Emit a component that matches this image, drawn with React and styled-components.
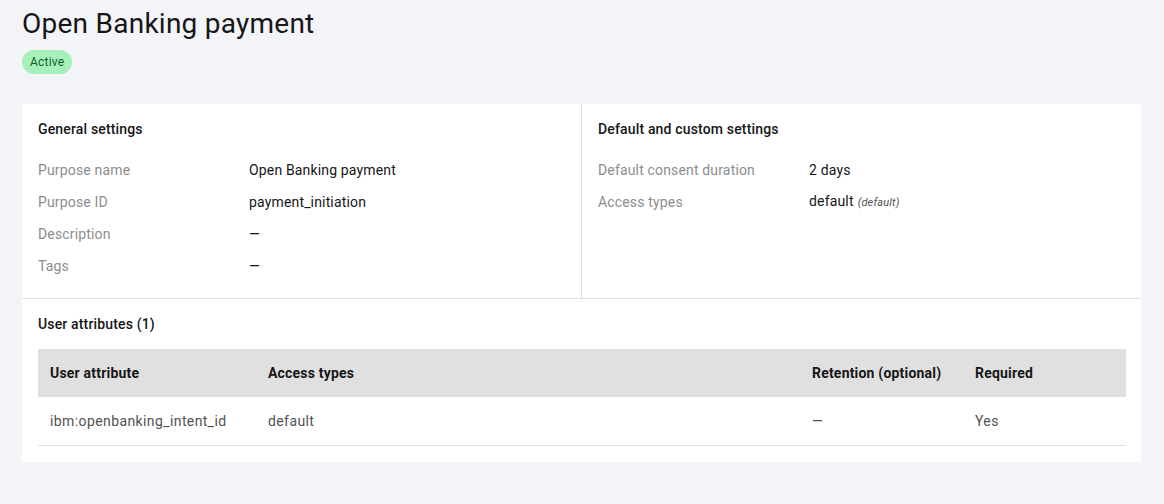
import React from "react";
import styled, { createGlobalStyle } from "styled-components";

const GlobalStyle = createGlobalStyle`
  *, *::before, *::after {
    box-sizing: border-box;
  }
  html, body {
    margin: 0;
    padding: 0;
    background: #f2f4f8;
  }
  body {
    font-family: Roboto, "Noto Sans", "Liberation Sans", sans-serif;
    color: #161616;
    -webkit-font-smoothing: antialiased;
  }
`;

const Page = styled.div`
  padding: 6px 23px 40px 22px;
  display: flex;
  flex-direction: column;
  align-items: flex-start;
`;

const Title = styled.h1`
  margin: 0;
  font-size: 28px;
  line-height: 36px;
  font-weight: 400;
  color: #161616;
  letter-spacing: 0.25px;
`;

const Tag = styled.span`
  margin-top: 8px;
  display: inline-flex;
  align-items: center;
  height: 24px;
  padding: 0 8px;
  border-radius: 12px;
  background: #a7f0ba;
  color: #0e6027;
  font-size: 12px;
  line-height: 16px;
  letter-spacing: 0.2px;
`;

const Card = styled.section`
  margin-top: 30px;
  align-self: stretch;
  background: #ffffff;
  display: flex;
  flex-direction: column;
`;

const TopGrid = styled.div`
  display: grid;
  grid-template-columns: 559px 1fr;
  border-bottom: 1px solid #dde1e6;
`;

const Column = styled.div`
  padding: 16px;
  border-left: ${(p) => (p.$divided ? "1px solid #dde1e6" : "none")};
`;

const SectionTitle = styled.h2`
  margin: 0 0 16px;
  font-size: 14px;
  line-height: 18px;
  font-weight: 500;
  color: #161616;
  letter-spacing: 0.16px;
`;

const Rows = styled.dl`
  margin: 0;
  display: flex;
  flex-direction: column;
`;

const Row = styled.div`
  display: grid;
  grid-template-columns: 211px 1fr;
  height: 32px;
  align-items: center;
`;

const Label = styled.dt`
  font-size: 14px;
  line-height: 18px;
  color: #8d8d8d;
  letter-spacing: 0.16px;
`;

const Value = styled.dd`
  margin: 0;
  font-size: 14px;
  line-height: 18px;
  color: #161616;
  letter-spacing: 0.16px;
`;

const Hint = styled.em`
  margin-left: 4px;
  font-size: 11px;
  color: #525252;
`;

const Bottom = styled.div`
  padding: 16px;
`;

const Table = styled.table`
  width: 100%;
  border-collapse: collapse;
  table-layout: fixed;
`;

const Th = styled.th`
  width: ${(p) => p.$w}px;
  height: 48px;
  padding: 0 12px;
  background: #e0e0e0;
  text-align: left;
  font-size: 14px;
  line-height: 18px;
  font-weight: 700;
  color: #161616;
  letter-spacing: 0.2px;
`;

const Td = styled.td`
  height: 48px;
  padding: 0 12px;
  border-bottom: 1px solid #e0e0e0;
  font-size: 14px;
  line-height: 18px;
  color: #525252;
  letter-spacing: 0.4px;
`;

const general = [
  ["Purpose name", "Open Banking payment"],
  ["Purpose ID", "payment_initiation"],
  ["Description", "—"],
  ["Tags", "—"],
];

export default function App() {
  return (
    <>
      <GlobalStyle />
      <Page>
        <Title>Open Banking payment</Title>
        <Tag>Active</Tag>
        <Card>
          <TopGrid>
            <Column>
              <SectionTitle>General settings</SectionTitle>
              <Rows>
                {general.map(([k, v]) => (
                  <Row key={k}>
                    <Label>{k}</Label>
                    <Value>{v}</Value>
                  </Row>
                ))}
              </Rows>
            </Column>
            <Column $divided>
              <SectionTitle>Default and custom settings</SectionTitle>
              <Rows>
                <Row>
                  <Label>Default consent duration</Label>
                  <Value>2 days</Value>
                </Row>
                <Row>
                  <Label>Access types</Label>
                  <Value>
                    default<Hint>(default)</Hint>
                  </Value>
                </Row>
              </Rows>
            </Column>
          </TopGrid>
          <Bottom>
            <SectionTitle>User attributes (1)</SectionTitle>
            <Table>
              <thead>
                <tr>
                  <Th $w={218}>User attribute</Th>
                  <Th $w={544}>Access types</Th>
                  <Th $w={163}>Retention (optional)</Th>
                  <Th $w={163}>Required</Th>
                </tr>
              </thead>
              <tbody>
                <tr>
                  <Td>ibm:openbanking_intent_id</Td>
                  <Td>default</Td>
                  <Td>—</Td>
                  <Td>Yes</Td>
                </tr>
              </tbody>
            </Table>
          </Bottom>
        </Card>
      </Page>
    </>
  );
}
